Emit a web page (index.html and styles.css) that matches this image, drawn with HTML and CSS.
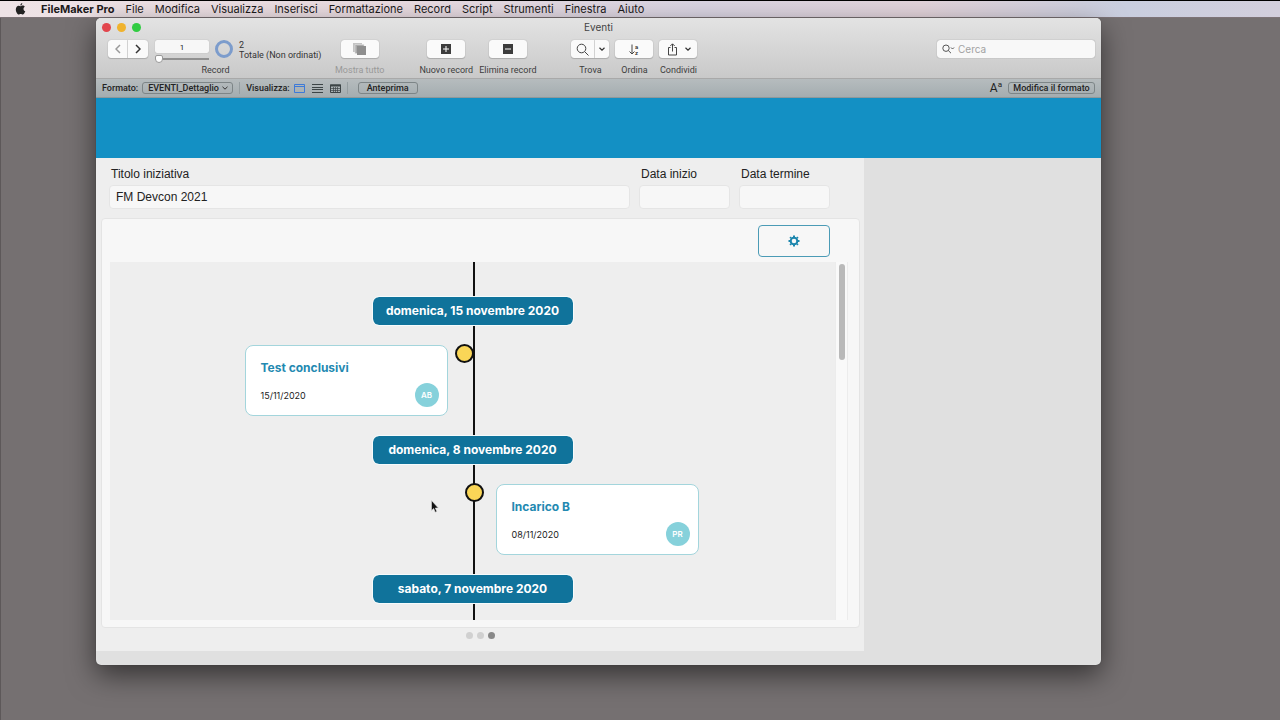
FILE: index.html
```html
<!DOCTYPE html>
<html lang="it">
<head>
<meta charset="utf-8">
<title>Eventi</title>
<link rel="stylesheet" href="styles.css">
</head>
<body>
<nav class="menubar">
  <svg class="apple" viewBox="0 0 10 12" aria-hidden="true"><path d="M6.8 0C6.9 1 5.900 2.500 4.800 2.500 4.700 1.400 5.700.3 6.800 0ZM5 3.200c.5 0 1.200-.6 2.200-.6.9 0 1.700.5 2.100 1.100-1.900 1.200-1.600 3.800.5 4.600C9.300 9.700 8.200 11.500 7.200 11.500c-.8 0-1-.5-2-.5s-1.300.5-2 .5C1.900 11.500.3 8.800.3 6.500.3 4 1.800 2.700 3.200 2.700c.8 0 1.400.5 1.800.5Z"/></svg>
  <a class="app-name" href="#">FileMaker Pro</a>
  <a href="#">File</a>
  <a href="#">Modifica</a>
  <a href="#">Visualizza</a>
  <a href="#">Inserisci</a>
  <a href="#">Formattazione</a>
  <a href="#">Record</a>
  <a href="#">Script</a>
  <a href="#">Strumenti</a>
  <a href="#">Finestra</a>
  <a href="#">Aiuto</a>
</nav>
<main class="desktop">
  <section class="window">
    <header class="chrome">
      <div class="titlebar">
        <div class="lights">
          <button class="light close" aria-label="Chiudi"></button>
          <button class="light minimize" aria-label="Riduci"></button>
          <button class="light zoom" aria-label="Ingrandisci"></button>
        </div>
        <h1 class="title">Eventi</h1>
      </div>
      <div class="toolbar">
        <div class="tool record-tool">
          <div class="record-row">
            <div class="segmented">
              <button class="push dim" aria-label="Record precedente"><svg class="arrow" viewBox="0 0 6 10"><path d="M5 1 1 5l4 4"/></svg></button>
              <button class="push" aria-label="Record successivo"><svg class="arrow" viewBox="0 0 6 10"><path d="m1 1 4 4-4 4"/></svg></button>
            </div>
            <div class="position">
              <input class="number" type="text" value="1" aria-label="Numero record">
              <input class="slider" type="range" min="1" max="2" value="1" aria-label="Posizione record">
            </div>
            <span class="ring"></span>
            <div class="count"><span>2</span><span>Totale (Non ordinati)</span></div>
          </div>
          <span class="caption">Record</span>
        </div>
        <div class="tool show-all">
          <button class="push wide" aria-labelledby="t-all"><svg class="icon-stack" viewBox="0 0 13 12"><path fill="#c4c4c4" d="M0 0h9v9H0z"/><path fill="#aaa" stroke="#e2e2e2" stroke-width=".6" d="M2 1.500h9v9H2z"/><path fill="#8e8e8e" d="M4 3h9v9H4z"/></svg></button>
          <span class="caption faded" id="t-all">Mostra tutto</span>
        </div>
        <div class="tool new-record">
          <button class="push wide" aria-labelledby="t-new"><svg class="icon-box" viewBox="0 0 10 10"><path fill="#3c3c3c" d="M0 0h10v10H0z"/><path stroke="#fff" stroke-width="1" d="M5 2v6M2 5h6"/></svg></button>
          <span class="caption" id="t-new">Nuovo record</span>
        </div>
        <div class="tool">
          <button class="push wide" aria-labelledby="t-del"><svg class="icon-box" viewBox="0 0 10 10"><path fill="#3c3c3c" d="M0 0h10v10H0z"/><path stroke="#fff" stroke-width="1" d="M2 5h6"/></svg></button>
          <span class="caption" id="t-del">Elimina record</span>
        </div>
        <div class="tool find">
          <div class="segmented">
            <button class="push find-main" aria-labelledby="t-find"><svg class="line-icon" viewBox="0 0 13 13"><circle cx="5.500" cy="5.500" r="4.300"/><path d="m8.700 8.700 3.800 3.800"/></svg></button>
            <button class="push find-more" aria-label="Altre opzioni di ricerca"><svg class="chevron" viewBox="0 0 6 4"><path d="m.5.8 2.500 2.400L5.500.8"/></svg></button>
          </div>
          <span class="caption" id="t-find">Trova</span>
        </div>
        <div class="tool">
          <button class="push wide" aria-labelledby="t-sort"><svg class="line-icon" viewBox="0 0 13 13"><path d="M4 1.500v9.500M1.500 8.500 4 11l2.500-2.500"/><text x="7" y="6">a</text><text x="7" y="12">z</text></svg></button>
          <span class="caption" id="t-sort">Ordina</span>
        </div>
        <div class="tool">
          <button class="push wide share" aria-labelledby="t-share"><svg class="line-icon" viewBox="0 0 13 13"><path d="M4.500 4.500H2.500v7.500h8V4.500h-2M6.500 8.500V1M4.300 3l2.200-2.200L8.700 3"/></svg><svg class="chevron" viewBox="0 0 6 4"><path d="m.5.8 2.500 2.400L5.500.8"/></svg></button>
          <span class="caption" id="t-share">Condividi</span>
        </div>
        <label class="search">
          <svg class="search-icon" viewBox="0 0 13 10"><circle cx="4" cy="4.200" r="3.200"/><path d="m6.300 6.500 2.700 2.700M9 3.500 10.500 5 12 3.500"/></svg>
          <input type="search" placeholder="Cerca" aria-label="Cerca">
        </label>
      </div>
    </header>
    <div class="formatbar">
      <label for="layout">Formato:</label>
      <select class="outlined layout-select" id="layout"><option>EVENTI_Dettaglio</option></select>
      <span class="divider"></span>
      <span>Visualizza:</span>
      <div class="views">
        <button class="view" aria-label="Scheda"><svg viewBox="0 0 11 9"><path fill="none" stroke="#3d7ad8" d="M.5.5h10v8H.5z"/><path stroke="#3d7ad8" d="M0 2.500h11"/></svg></button>
        <button class="view" aria-label="Elenco"><svg viewBox="0 0 11 9"><path stroke="#3c4446" d="M0 .5h11M0 3.500h11M0 5.500h11M0 8.500h11"/></svg></button>
        <button class="view" aria-label="Tabella"><svg viewBox="0 0 11 9"><path fill="none" stroke="#3c4446" d="M.5 1h10v7.500H.5z"/><path stroke="#3c4446" stroke-width="2" d="M0 1.500h11"/><path stroke="#3c4446" d="M3.500 3v6M5.500 3v6M7.500 3v6M0 4.500h11M0 6.500h11" stroke-width=".7"/></svg></button>
      </div>
      <span class="divider"></span>
      <button class="outlined preview">Anteprima</button>
      <button class="text-size" aria-label="Barra di formattazione">A<sup>a</sup></button>
      <button class="outlined edit-layout">Modifica il formato</button>
    </div>
    <div class="band"></div>
    <div class="canvas">
      <div class="page">
        <form class="fields">
          <label class="field field-title">Titolo iniziativa<input type="text" value="FM Devcon 2021"></label>
          <label class="field">Data inizio<input type="text"></label>
          <label class="field">Data termine<input type="text"></label>
        </form>
        <section class="panel">
          <div class="panel-tools">
            <button class="settings" aria-label="Impostazioni"><svg viewBox="0 0 12 12"><circle cx="6" cy="6" r="3.300" fill="none" stroke="#1c86ad" stroke-width="2"/><path stroke="#1c86ad" stroke-width="2" d="M6 .5V2M6 10v1.500M.5 6H2M10 6h1.500M2.100 2.100l1 1M8.900 8.900l1 1M9.900 2.100l-1 1M3.100 8.900l-1 1"/></svg></button>
          </div>
          <div class="viewer">
            <div class="timeline">
              <h2 class="day">domenica, 15 novembre 2020</h2>
              <div class="row">
                <article class="card left">
                  <h3>Test conclusivi</h3>
                  <div class="card-foot"><time>15/11/2020</time><span class="avatar">AB</span></div>
                </article>
                <span class="dot dot-left"></span>
              </div>
              <h2 class="day">domenica, 8 novembre 2020</h2>
              <div class="row">
                <span class="dot"></span>
                <article class="card right">
                  <h3>Incarico B</h3>
                  <div class="card-foot"><time>08/11/2020</time><span class="avatar">PR</span></div>
                </article>
              </div>
              <h2 class="day">sabato, 7 novembre 2020</h2>
            </div>
            <div class="scrollbar"><div class="thumb"></div></div>
          </div>
        </section>
        <div class="pager"><button aria-label="Pagina 1"></button><button aria-label="Pagina 2"></button><button class="current" aria-label="Pagina 3"></button></div>
      </div>
    </div>
  </section>
  <svg class="cursor" viewBox="0 0 8 13" aria-hidden="true"><path d="M.5.5v10l2.200-2 1.500 3.700 1.600-.7L4.300 8h3Z"/></svg>
</main>
</body>
</html>
```

FILE: styles.css
```css
* { box-sizing: border-box; }

body {
  margin: 0;
  min-height: 100vh;
  display: flex;
  flex-direction: column;
  background: #757071;
  color: #222;
  font-family: Inter, "Liberation Sans", sans-serif;
  font-size: 9px;
}

button, input, select { font: inherit; color: inherit; margin: 0; padding: 0; }
button { border: 0; background: none; display: flex; align-items: center; justify-content: center; }
h1, h2, h3 { margin: 0; }
svg { display: block; }

.menubar {
  display: flex;
  align-items: center;
  gap: 11px;
  height: 18px;
  padding-left: 15px;
  border-top: 1px solid #000;
  border-bottom: 1px solid #7d7377;
  background: linear-gradient(90deg, #eee3e6, #e9dbe0 30%, #d9d4e2 55%, #e2d3da 72%, #c9cedf 88%, #d3cfdd);
  font-size: 11px;
}
.menubar a { color: #1c1a1b; text-decoration: none; white-space: nowrap; }
.menubar .app-name { margin-left: 4px; font-weight: 700; }
.apple { width: 11px; height: 12px; fill: #222; }

.desktop {
  position: relative;
  flex: 1;
  display: flex;
  padding: 0 179px 55px 95px;
  border-left: 1px solid #5d5859;
}
.window {
  flex: 1;
  display: flex;
  flex-direction: column;
  border-radius: 5px;
  overflow: hidden;
  background: #e0e0e0;
  box-shadow: 0 0 1px #333, 0 10px 28px rgba(0, 0, 0, .55);
}

.chrome { background: linear-gradient(#e3e3e3, #c9c9c9); border-bottom: 1px solid #a9a9a9; }
.titlebar { display: grid; grid-template-columns: 1fr auto 1fr; align-items: center; height: 18px; padding: 0 6px; }
.lights { display: flex; gap: 6px; }
.light { width: 9px; height: 9px; border-radius: 50%; }
.close { background: #e2464d; }
.minimize { background: #f0b32e; }
.zoom { background: #31cc42; }
.title { font-size: 10px; font-weight: 400; color: #444; }

.toolbar { display: flex; align-items: flex-start; gap: 6px; height: 42px; padding: 4px 6px 0 12px; font-family: Roboto, sans-serif; }
.tool { display: flex; flex-direction: column; align-items: center; gap: 6px; }
.caption { font-size: 9px; line-height: 12px; color: #3d3d3d; white-space: nowrap; }
.faded { color: #999; }
.record-tool { width: 215px; }
.record-row { display: flex; gap: 6px; height: 18px; align-items: flex-start; align-self: flex-start; }
.record-row .segmented { margin-right: 1px; }
.show-all { margin-left: 6px; }
.new-record { margin-left: 29px; }
.find { margin-left: 29px; }
.push {
  height: 18px;
  border-radius: 3px;
  background: #fafafa;
  box-shadow: 0 0 1px rgba(0, 0, 0, .35), 0 1px 1px rgba(0, 0, 0, .15);
}
.wide { width: 38px; }
.segmented { display: flex; }
.segmented .push { width: 20px; }
.segmented .push:first-child { border-radius: 3px 0 0 3px; border-right: 1px solid #ddd; }
.segmented .push:last-child { border-radius: 0 3px 3px 0; }
.segmented .find-main { width: 24px; }
.segmented .find-more { width: 14px; }
.share { gap: 6px; }
.arrow { width: 6px; height: 10px; fill: none; stroke: #333; stroke-width: 1.5; }
.dim .arrow { stroke: #999; }
.icon-stack { width: 13px; height: 12px; }
.icon-box { width: 10px; height: 10px; }
.line-icon { width: 13px; height: 13px; fill: none; stroke: #444; }
.line-icon text { font-size: 6px; font-weight: 600; fill: #333; stroke: none; }
.chevron { width: 6px; height: 4px; fill: none; stroke: #333; stroke-width: 1.2; }

.position { width: 54px; display: flex; flex-direction: column; gap: 1px; }
.number { width: 100%; height: 13px; padding-top: 2px; border: 0; border-radius: 2px; background: #f7f7f7; box-shadow: 0 0 1px #999; text-align: center; font-size: 8px; }
.slider { appearance: none; width: 100%; height: 9px; background: linear-gradient(#909090, #909090) center / 100% 2px no-repeat; }
.slider::-webkit-slider-thumb { appearance: none; width: 8px; height: 8px; border: 1px solid #999; border-radius: 2px 2px 4px 4px; background: #fff; }
.ring { width: 18px; height: 18px; border: 3px solid #7c9ccc; border-radius: 50%; }
.count { display: flex; flex-direction: column; line-height: 10px; white-space: nowrap; color: #333; }

.search { display: flex; align-items: center; gap: 3px; width: 158px; height: 18px; margin-left: auto; padding: 0 5px; border-radius: 3px; background: #f8f8f8; box-shadow: 0 0 1px #777; font-family: Inter, sans-serif; }
.search input { width: 100%; min-width: 0; border: 0; outline: 0; background: none; font-size: 10px; }
.search input::placeholder { color: #a2a2a2; }
.search-icon { flex: none; width: 13px; height: 10px; fill: none; stroke: #555; }

.formatbar { display: flex; align-items: center; gap: 4px; height: 19px; padding: 0 6px; background: linear-gradient(#b6bcbe, #a4adb0); border-bottom: 1px solid #8e989b; font-family: Roboto, sans-serif; font-weight: 500; white-space: nowrap; }
.outlined { height: 12px; padding: 0 5px; border: 1px solid #7d8587; border-radius: 3px; background: transparent; }
.layout-select { appearance: none; width: 91px; background: url("data:image/svg+xml,%3Csvg xmlns='http://www.w3.org/2000/svg' viewBox='0 0 6 4'%3E%3Cpath d='m.5.8 2.500 2.400L5.500.8' fill='none' stroke='%23333'/%3E%3C/svg%3E") right 4px center / 6px 4px no-repeat; }
.divider { width: 1px; height: 12px; margin: 0 2px; background: #959ea1; }
.views { display: flex; gap: 7px; }
.view svg { width: 11px; height: 9px; }
.preview { width: 60px; margin-left: 4px; }
.edit-layout { width: 87px; }
.text-size { margin-left: auto; margin-right: 2px; font-size: 12px; font-weight: 400; }
.text-size sup { align-self: flex-start; font-size: 8px; line-height: 8px; }

.band { height: 60px; background: #1390c4; }
.canvas { flex: 1; padding: 0 237px 14px 0; }
.page { height: 100%; display: flex; flex-direction: column; padding: 8px 4px 0 5px; background: #eee; }

.fields { display: flex; gap: 9px; padding: 0 30px 0 8px; }
.field { display: flex; flex-direction: column; gap: 3px; width: 91px; font-family: "Liberation Sans", Arial, sans-serif; font-size: 12px; line-height: 16px; text-indent: 2px; }
.field-title { flex: 1; }
.field input { width: 100%; height: 24px; padding: 0 6px; border: 1px solid #e5e5e5; border-radius: 4px; background: #f7f7f7; text-indent: 0; }

.panel { flex: 1; display: flex; flex-direction: column; margin-top: 9px; padding: 6px 11px 7px 8px; border: 1px solid #e4e4e4; border-radius: 4px; background: #f7f7f7; }
.panel-tools { display: flex; justify-content: flex-end; padding-right: 18px; }
.settings { width: 72px; height: 32px; border: 1px solid #4b9bb6; border-radius: 4px; }
.settings svg { width: 12px; height: 12px; }
.viewer { flex: 1; display: flex; margin-top: 5px; }
.timeline {
  flex: 1;
  display: flex;
  flex-direction: column;
  align-items: center;
  padding-top: 34px;
  background: linear-gradient(#111, #111) calc(50% + 1px) 0 / 2px 100% no-repeat #eee;
}
.day { width: 202px; padding: 6px 0; border: 1px solid #f5fbfc; border-radius: 7px; background: #10739b; background-clip: padding-box; color: #fff; font-size: 12px; line-height: 16px; font-weight: 700; text-align: center; }
.row { position: relative; width: 100%; padding: 19px 0; }
.card { width: 203px; padding: 12px 8px 8px 15px; border: 1px solid #a3d5dc; border-radius: 8px; background: #fff; }
.left { margin-left: calc(50% - 228px); }
.right { margin-left: calc(50% + 23px); }
.card h3 { color: #2389b1; font-size: 12px; line-height: 20px; font-weight: 700; }
.card-foot { display: flex; justify-content: space-between; align-items: center; padding-top: 5px; line-height: 12px; }
.card time { padding-top: 2px; }
.avatar { display: flex; align-items: center; justify-content: center; width: 24px; height: 24px; border-radius: 50%; background: #86d1db; color: #fff; font-size: 8px; font-weight: 600; }
.dot { position: absolute; top: 18px; left: calc(50% - 8px); width: 19px; height: 19px; border: 2px solid #111; border-radius: 50%; background: #fad657; }
.dot-left { left: calc(50% - 18px); }
.scrollbar { width: 13px; padding: 2px; border: solid #ececec; border-width: 0 1px; background: #f9f9f9; }
.thumb { width: 6px; height: 96px; margin: 0 auto; border-radius: 3px; background: #b9b9b9; }

.pager { display: flex; justify-content: center; gap: 4px; height: 23px; padding: 4px 1px 0 0; }
.pager button { width: 7px; height: 7px; border-radius: 50%; background: #d0d0d0; }
.pager .current { background: #888; }

.cursor { position: absolute; left: 430px; top: 482px; width: 8px; height: 13px; fill: #111; stroke: #ddd; stroke-width: .6; }
```
